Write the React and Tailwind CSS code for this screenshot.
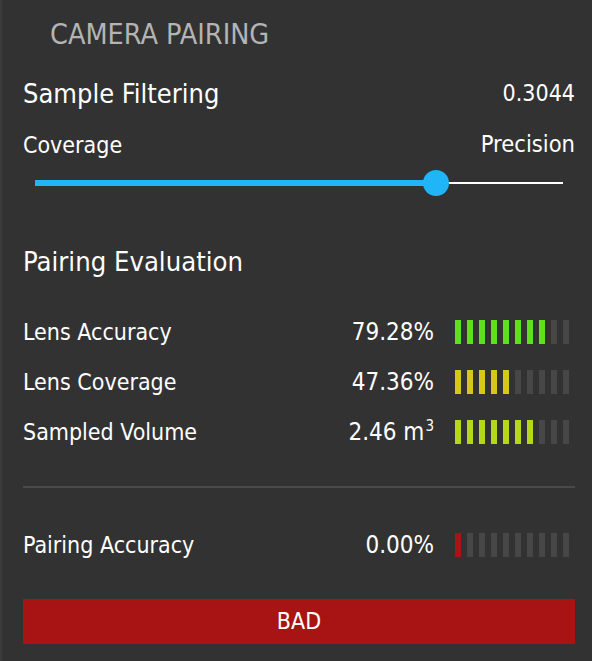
import React from 'react';

const FONT = { fontFamily: '"DejaVu Sans Condensed", "DejaVu Sans", sans-serif' };

const metrics = [
  { label: 'Lens Accuracy', value: '79.28%', lit: 8, color: 'bg-[#5ee01a]' },
  { label: 'Lens Coverage', value: '47.36%', lit: 5, color: 'bg-[#d6c81a]' },
  { label: 'Sampled Volume', value: '2.46 m', sup: '3', lit: 7, color: 'bg-[#b6d81a]' },
];

const Meter = ({ lit, color }) => (
  <div className="flex gap-[6px] h-[24px] mr-[6px]">
    {Array.from({ length: 10 }).map((_, i) => (
      <div key={i} className={`w-[6px] h-full ${i < lit ? color : 'bg-[#474747]'}`} />
    ))}
  </div>
);

const MetricRow = ({ label, value, sup, lit, color }) => (
  <div className="flex items-center h-[50px] leading-none">
    <span className="flex-1 text-[23px] text-white">{label}</span>
    <span className="text-[24px] text-white mr-[21px]">
      {value}
      {sup && <sup className="text-[15px] relative -top-[9px] ml-[1px]">{sup}</sup>}
    </span>
    <Meter lit={lit} color={color} />
  </div>
);

export default function App() {
  const slider = 0.759;
  return (
    <div className="w-[592px] h-[661px] bg-[#323232] border-l-2 border-[#3b3b3b] overflow-hidden leading-none" style={FONT}>
      <div className="pl-[48px] h-[70px] flex items-center text-[28.5px] text-[#b4b4b4]">CAMERA PAIRING</div>

      <div className="pl-[21px] pr-[17px]">
        <div className="flex items-center justify-between h-[46px]">
          <span className="text-[27px] text-white">Sample Filtering</span>
          <span className="text-[23px] text-white">0.3044</span>
        </div>

        <div className="flex items-center justify-between mt-[12px] h-[34px] text-[23px] text-white">
          <span>Coverage</span>
          <span className="text-[23.5px]">Precision</span>
        </div>

        <div className="relative mx-[12px] mt-[8px] h-[26px] flex items-center">
          <div className="absolute left-0 right-0 h-[2px] bg-white" />
          <div className="absolute left-0 h-[6px] bg-[#1fb5f7]" style={{ width: `${slider * 100}%` }} />
          <div
            className="absolute w-[26px] h-[26px] rounded-full bg-[#1fb5f7] -translate-x-1/2"
            style={{ left: `${slider * 100}%` }}
          />
        </div>

        <div className="mt-[46px] h-[40px] flex items-center text-[27.2px] text-white">Pairing Evaluation</div>

        <div className="mt-[25px]">
          {metrics.map((m) => (
            <MetricRow key={m.label} {...m} />
          ))}
        </div>

        <div className="mt-[29px] h-[2px] bg-[#494949]" />

        <div className="mt-[32px]">
          <MetricRow label="Pairing Accuracy" value="0.00%" lit={1} color="bg-[#a81414]" />
        </div>

        <div className="mt-[29px] h-[45px] bg-[#a81414] flex items-center justify-center text-[23px] text-white">
          BAD
        </div>
      </div>
    </div>
  );
}
